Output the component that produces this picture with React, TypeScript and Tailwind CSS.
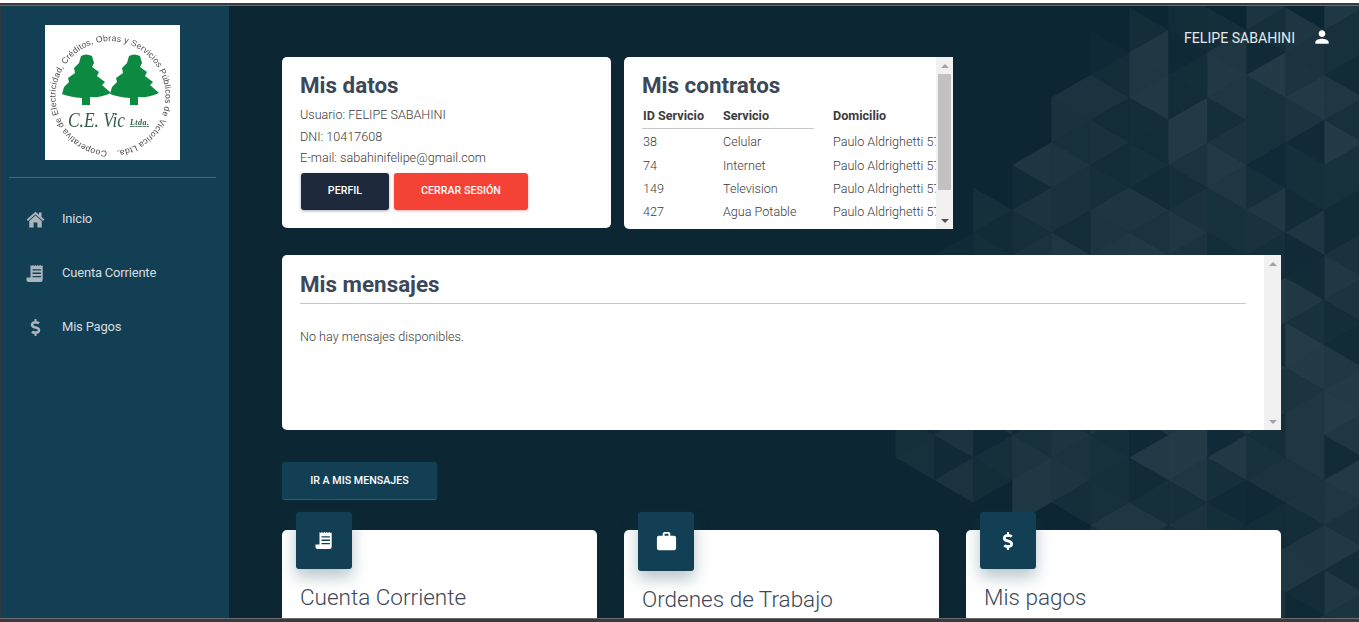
import { FaDollarSign } from "react-icons/fa";
import { MdPerson, MdWork } from "react-icons/md";

const ROWS = [
  { id: "38", name: "Celular" },
  { id: "74", name: "Internet" },
  { id: "149", name: "Television" },
  { id: "427", name: "Agua Potable" },
];

function HomeIcon() {
  return (
    <svg viewBox="0 0 20 18" width="19" height="17" fill="currentColor">
      <path d="M10 .8 L.6 9 L2 10.6 L10 3.6 L18 10.6 L19.4 9 L16.4 6.4 V1.6 H13.6 V4 Z" />
      <path d="M3.4 10.6 L10 4.8 L16.6 10.6 V17.4 H12 V12.2 H8 V17.4 H3.4 Z" />
    </svg>
  );
}

function ReceiptIcon({ size }: { size: number }) {
  return (
    <svg viewBox="0 0 18 19" width={size} height={size} fill="currentColor">
      <path
        fillRule="evenodd"
        d="M4 1 l1.2 1 1.2-1 1.2 1 1.2-1 1.2 1 1.2-1 1.2 1 1.2-1 1.5 1 1.1-.6 V15.5 a2.5 2.5 0 0 1-2.5 2.5 H2 a2 2 0 0 1-2-2 v-2.5 h4 Z M6 5.2 h8.4 v1.3 h-8.4 Z M6 8.6 h8.4 v1.3 h-8.4 Z M6 12 h8.4 v1.3 h-8.4 Z"
      />
    </svg>
  );
}

const MENU = [
  { label: "Inicio", icon: <HomeIcon /> },
  { label: "Cuenta Corriente", icon: <ReceiptIcon size={19} /> },
  { label: "Mis Pagos", icon: <FaDollarSign size={17} /> },
];

const CARDS = [
  { title: "Cuenta Corriente", icon: <ReceiptIcon size={19} />, tall: false },
  { title: "Ordenes de Trabajo", icon: <MdWork size={23} />, tall: true },
  { title: "Mis pagos", icon: <FaDollarSign size={18} />, tall: false },
];

// triangle grid of the page background
function pattern() {
  const out: { points: string; opacity: number }[] = [];
  const dx = 39;
  const dy = 45;
  for (let k = -9; k < 6; k++) {
    const x = 1167.3 + k * dx;
    const off = k % 2 === 0 ? 0 : 22.5;
    for (let n = -1; n < 15; n++) {
      const y = 30 + n * dy + off;
      const tris = [
        [x, y, x, y + dy, x + dx, y + dy / 2],
        [x, y + dy, x + dx, y + dy / 2, x + dx, y + dy + dy / 2],
      ];
      tris.forEach((t, i) => {
        const cx = (t[0] + t[2] + t[4]) / 3;
        const cy = (t[1] + t[3] + t[5]) / 3;
        const inside = cx > Math.max(890, 1140 - 0.75 * cy) && (cy < 465 + (cx - 900) * 0.35 || cx > 1090);
        if (!inside) return;
        const h = Math.abs(Math.sin(k * 12.9898 + n * 78.233 + i * 37.719) * 43758.5453) % 1;
        const strength = Math.min(1, (cx - 900) / 380 + cy / 1400);
        out.push({ points: t.join(","), opacity: (0.015 + h * 0.075) * (0.6 + strength * 0.5) });
      });
    }
  }
  return out;
}

function treePath(c: number) {
  return `M${c - 5} 31 Q${c} 28 ${c + 6} 31 L${c + 8} 38 L${c + 6} 42 L${c + 13} 47 L${c + 11} 51 L${c + 19} 57 L${c + 16} 60 L${c + 25} 68 Q${c + 15} 73 ${c + 4} 72 L${c + 4} 80 L${c - 4} 80 L${c - 4} 73 Q${c - 16} 72 ${c - 24} 69 L${c - 22} 62 L${c - 17} 57 L${c - 18} 53 L${c - 11} 48 L${c - 12} 43 L${c - 7} 38 Z`;
}

function Logo() {
  return (
    <div className="w-[135px] h-[135px] bg-white">
      <svg viewBox="0 0 135 135" className="w-full h-full">
        <defs>
          <path id="ring" d="M 62 126 A 55 55 0 1 1 69 126" />
          <filter id="soft"><feGaussianBlur stdDeviation="0.4" /></filter>
        </defs>
        <g filter="url(#soft)">
          <text fontFamily="Liberation Sans" fontSize="8.6" fill="#4a4a4a">
            <textPath href="#ring" textLength="335">Cooperativa de Electricidad, Créditos, Obras y Servicios Públicos de Victorica Ltda.</textPath>
          </text>
          <path fill="#0f8a43" d={treePath(41)} />
          <path fill="#0f8a43" d={treePath(89)} />
          <text x="23" y="102" fontFamily="Liberation Serif" fontStyle="italic" fontSize="21" fill="#2f5e47" textLength="57" lengthAdjust="spacingAndGlyphs">C.E. Vic</text>
          <text x="85" y="100" fontFamily="Liberation Serif" fontStyle="italic" fontWeight="700" fontSize="8" fill="#2f5e47" textLength="19" textDecoration="underline">Ltda.</text>
        </g>
      </svg>
    </div>
  );
}

function ScrollBar({ thumb }: { thumb?: boolean }) {
  return (
    <div className="flex flex-col items-center w-[17px] shrink-0 h-full bg-[#f1f1f1]">
      <div className="h-[17px] w-full shrink-0 flex items-center justify-center">
        <div className="w-0 h-0 border-x-[4px] border-x-transparent border-b-[4px] border-b-[#a3a3a3]" />
      </div>
      {thumb ? <div className="w-[13px] h-[116px] bg-[#c1c1c1]" /> : null}
      <div className="flex-1" />
      <div className="h-[17px] w-full shrink-0 flex items-center justify-center">
        <div className={`w-0 h-0 border-x-[4px] border-x-transparent border-t-[4px] ${thumb ? "border-t-[#505050]" : "border-t-[#a3a3a3]"}`} />
      </div>
    </div>
  );
}

export default function App() {
  return (
    <div className="h-[622px] w-[1359px] overflow-hidden bg-white font-['Roboto',sans-serif] pt-[3px]">
      <div className="h-[3px] bg-[#3a3a3d] border-b border-[#6b6b6e]" />
      <div className="relative flex h-[612px] bg-[#0c2733] border-l border-[#2e3a40] overflow-hidden">
        {/* Background */}
        <svg className="absolute left-0 top-[-6px] w-[1359px] h-[640px]" viewBox="0 0 1359 640">
          {pattern().map((t, i) => (
            <polygon key={i} points={t.points} fill="#ffffff" fillOpacity={t.opacity} />
          ))}
        </svg>

        {/* Sidebar */}
        <aside className="relative w-[228px] shrink-0 bg-[#123f54] flex flex-col">
          <div className="pl-[44px] pt-[19px]">
            <Logo />
          </div>
          <div className="mx-[8px] mt-[17px] w-[207px] h-px bg-[#46687a]" />
          <nav className="mt-[14px] flex flex-col">
            {MENU.map((item) => (
              <div key={item.label} className="h-[54px] flex items-center pl-[24px] text-[13px] tracking-[-0.2px] text-[#d5dde1]">
                <span className="w-[20px] flex justify-center text-[#a9b5bd] mr-[17px]">{item.icon}</span>
                {item.label}
              </div>
            ))}
          </nav>
        </aside>

        {/* Main */}
        <main className="relative flex-1 pl-[53px]">
          <div className="absolute right-[27px] top-[22px] flex items-center text-[14.1px] leading-[20px] text-[#e6e9eb]">
            FELIPE SABAHINI
            <MdPerson size={20} className="ml-[17px] -mt-[2px] text-white" />
          </div>

          <div className="pt-[51px] flex gap-[13px]">
            <section className="w-[329px] h-[171px] bg-white rounded-[5px] pl-[18px] pt-[14px]">
              <h2 className="text-[22.4px] leading-[28px] font-bold text-[#3c4858]">Mis datos</h2>
              <div className="mt-[5px] text-[12.6px] font-light text-[#3c3c3c] leading-[21.5px]">
                <p>Usuario: FELIPE SABAHINI</p>
                <p>DNI: 10417608</p>
                <p>E-mail: sabahinifelipe@gmail.com</p>
              </div>
              <div className="mt-[4px] ml-[1px] flex gap-[5px]">
                <button className="w-[88px] h-[37px] pt-[1px] rounded-[3px] bg-[#1e293b] text-white text-[10.7px] font-medium shadow-[0_1px_3px_rgba(30,41,59,0.4)]">
                  PERFIL
                </button>
                <button className="w-[134px] h-[37px] pt-[1px] rounded-[3px] bg-[#f44336] text-white text-[10.7px] font-medium shadow-[0_1px_3px_rgba(244,67,54,0.4)]">
                  CERRAR SESIÓN
                </button>
              </div>
            </section>

            <section className="w-[329px] h-[172px] bg-white rounded-l-[5px] flex overflow-hidden">
              <div className="flex-1 min-w-0 pt-[14px] pl-[18px] overflow-hidden">
                <h2 className="text-[22.4px] leading-[28px] font-bold text-[#3c4858]">Mis contratos</h2>
                <div className="mt-[9px] flex w-[340px] text-[12.6px] text-[#3c3c3c]">
                  <div className="w-[172px] shrink-0">
                    <div className="flex h-[21px] border-b border-[#c8c8c8] font-bold pl-[1px] leading-[16px] mb-[2px]">
                      <span className="w-[80px]">ID Servicio</span>
                      <span>Servicio</span>
                    </div>
                    {ROWS.map((row) => (
                      <div key={row.id} className="flex h-[23.3px] items-center pl-[1px] font-light">
                        <span className="w-[80px]">{row.id}</span>
                        <span>{row.name}</span>
                      </div>
                    ))}
                  </div>
                  <div className="ml-[19px]">
                    <div className="h-[23px] font-bold leading-[16px]">Domicilio</div>
                    {ROWS.map((row) => (
                      <div key={row.id} className="h-[23.3px] flex items-center font-light whitespace-nowrap">
                        Paulo Aldrighetti 570
                      </div>
                    ))}
                  </div>
                </div>
              </div>
              <ScrollBar thumb />
            </section>
          </div>

          <section className="mt-[26px] w-[999px] h-[175px] bg-white rounded-l-[5px] flex">
            <div className="flex-1 pl-[18px] pr-[18px] pt-[15px]">
              <h2 className="text-[22.4px] leading-[28px] font-bold text-[#3c4858] pb-[5px] border-b border-[#c8c8c8]">Mis mensajes</h2>
              <p className="mt-[24px] text-[12.6px] font-light text-[#3c3c3c]">No hay mensajes disponibles.</p>
            </div>
            <ScrollBar />
          </section>

          <button className="mt-[32px] block w-[155px] h-[38px] pt-[1px] rounded-[3px] bg-[#123f54] text-white text-[10.7px] font-medium border-b border-[#2c5a70] shadow-[0_0_3px_rgba(18,63,84,0.6)]">
            IR A MIS MENSAJES
          </button>

          <div className="mt-[30px] flex gap-[27px]">
            {CARDS.map((card) => (
              <div key={card.title} className="w-[315px] h-[120px] bg-white rounded-[5px] pl-[14px]">
                <div
                  className={`-mt-[18px] w-[56px] rounded-[3px] bg-[#123f54] text-white flex items-center justify-center shadow-[0_8px_16px_rgba(18,63,84,0.3)] ${card.tall ? "h-[59px]" : "h-[57px]"}`}
                >
                  {card.icon}
                </div>
                <div className="mt-[14px] pl-[4px] text-[22.5px] font-light text-[#3c4858] leading-[28px]">
                  {card.title}
                </div>
              </div>
            ))}
          </div>
        </main>
      </div>
      <div className="h-[4px] bg-[#3a3a3d] border-t border-[#6b6b6e]" />
    </div>
  );
}
